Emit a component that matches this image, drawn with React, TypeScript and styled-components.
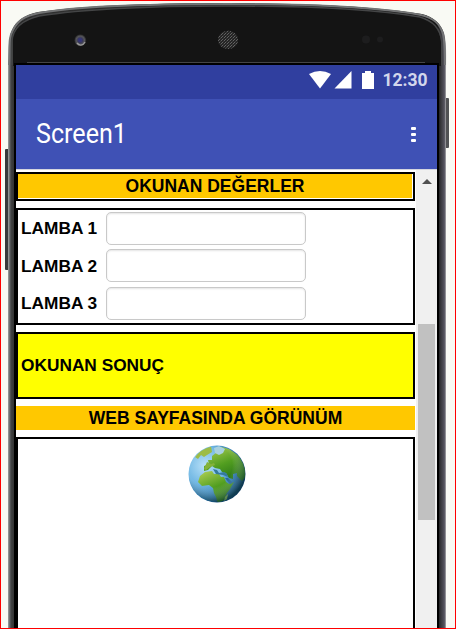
import React from "react";
import styled, { createGlobalStyle } from "styled-components";

const GlobalStyle = createGlobalStyle`
  *, *::before, *::after { box-sizing: border-box; }
  html, body { margin: 0; overflow: hidden; }
  body { font-family: "Liberation Sans", Arial, sans-serif; color: #000; }
`;

const Stage = styled.div`
  position: relative;
  width: 456px;
  height: 629px;
  overflow: hidden;
  background: #f9faf4;
  padding: 63px 17px 0 14px;
  &::after {
    content: "";
    position: absolute;
    inset: 0;
    border: 1px solid #ff0000;
    pointer-events: none;
  }
`;

const PhoneArt = styled.svg`
  position: absolute;
  inset: 0;
`;

const Screen = styled.main`
  position: relative;
  width: 425px;
  height: 566px;
  border: 2px solid #000;
  border-bottom: 0;
  background: #fff;
  display: flex;
  flex-direction: column;
`;

const StatusBar = styled.div`
  height: 34px;
  flex: none;
  background: #303f9f;
  display: flex;
  align-items: flex-start;
  justify-content: flex-end;
  padding: 5px 10px 0 0;
`;

const StatusIcons = styled.svg`
  display: block;
  margin-right: 8px;
`;

const Clock = styled.time`
  font: 700 17.5px/20px Roboto, sans-serif;
  color: #d3d7ec;
  width: 44.5px;
  white-space: nowrap;
`;

const TitleBar = styled.header`
  height: 71px;
  flex: none;
  background: #3f51b5;
  border-bottom: 1px solid #d4d5df;
  display: flex;
  align-items: center;
  justify-content: space-between;
  padding: 0 21px 0 20px;
`;

const Title = styled.h1`
  margin: 0;
  font: 400 27px/32px Roboto, sans-serif;
  color: #fff;
  transform: scaleX(0.93);
  transform-origin: left;
`;

const MenuButton = styled.button`
  border: 0;
  padding: 0;
  background: none;
  display: flex;
  flex-direction: column;
  gap: 3px;
`;

const Dot = styled.span`
  width: 5px;
  height: 3px;
  border-radius: 1px;
  background: #fff;
`;

const Viewport = styled.div`
  flex: 1;
  min-height: 0;
  display: flex;
`;

const Content = styled.div`
  width: 399px;
  padding-top: 2px;
  display: flex;
  flex-direction: column;
  gap: 7px;
`;

const Panel = styled.section<{ $height?: number; $color?: string }>`
  ${(p) => (p.$height ? `height: ${p.$height}px; flex: none;` : "flex: 1;")}
  border: 2px solid #000;
  background: ${(p) => p.$color ?? "#fff"};
  display: flex;
  flex-direction: column;
`;

const Heading = styled.h2`
  margin: 0;
  height: 24px;
  flex: none;
  background: #ffc800;
  font-size: 17.5px;
  line-height: 24px;
  text-align: center;
`;

const HeadingPanel = styled(Panel)`
  padding: 0 1px 1px 0;
`;

const Fields = styled(Panel)`
  padding: 2px 3px 0;
  gap: 4.7px;
`;

const Field = styled.label`
  display: grid;
  grid-template-columns: 85px 200px;
  align-items: center;
  height: 32.8px;
  font-size: 17.3px;
  font-weight: 700;
`;

const FieldName = styled.span`
  padding-top: 1px;
`;

const TextBox = styled.input`
  width: 200px;
  height: 32.8px;
  border: 1px solid #c9c9c9;
  border-radius: 5px;
  box-shadow: inset 0 1px 2px #e4e4e4;
  background: #fff;
`;

const Result = styled(Panel)`
  justify-content: center;
  padding-left: 3px;
  font-size: 17.3px;
  font-weight: 700;
`;

const WebPanel = styled(Panel)`
  align-items: center;
  padding: 4px 0 0 3px;
  border-bottom: 0;
`;

const Scrollbar = styled.div`
  width: 21px;
  margin-left: 1px;
  background: #f0f0f0;
  display: flex;
  flex-direction: column;
  align-items: flex-start;
  padding: 9px 0 0 2px;
`;

const ArrowUp = styled.span`
  margin-left: 3.5px;
  border: 5px solid transparent;
  border-top: 0;
  border-bottom-color: #505050;
`;

const Thumb = styled.div`
  width: 17px;
  height: 196px;
  flex: none;
  margin-top: 140px;
  background: #c1c1c1;
`;

const silhouette =
  "M8 640V66C9 52 8 38 12 30C16 21 24 15 38 12C78 6 150 3 228 3C310 3 382 7 422 14C434 17 441 24 444 33C447 44 446 58 446 76V640Z";

function Phone() {
  return (
    <PhoneArt width="456" height="629" viewBox="0 0 456 629" aria-hidden="true">
      <defs>
        <linearGradient id="side" x1="0" x2="1">
          <stop offset="0" stopColor="#a3a4a2" />
          <stop offset=".004" stopColor="#65676a" />
          <stop offset=".007" stopColor="#414243" />
          <stop offset=".014" stopColor="#323232" />
          <stop offset=".98" stopColor="#141414" />
          <stop offset=".988" stopColor="#38383c" />
          <stop offset=".996" stopColor="#56555f" />
          <stop offset="1" stopColor="#b5b5b5" />
        </linearGradient>
        <pattern id="speaker" width="3" height="3" patternUnits="userSpaceOnUse">
          <rect width="3" height="3" fill="#252525" />
          <path d="M0 0h1v1H0zM2 1h1v1H2z" fill="#626262" />
          <path d="M1 2h1v1H1z" fill="#404040" />
        </pattern>
        <radialGradient id="lens">
          <stop stopColor="#4a4b91" />
          <stop offset=".38" stopColor="#38385a" />
          <stop offset=".7" stopColor="#555558" />
          <stop offset="1" stopColor="#202020" />
        </radialGradient>
      </defs>
      <rect x="5" y="149" width="4" height="121" rx="1" fill="#393a3b" />
      <rect x="445" y="98" width="4" height="50" rx="1" fill="#515254" />
      <path d={silhouette} fill="url(#side)" />
      <path d="M13 66V37C13 27 22 19 38 16C85 9 151 6 228 6C310 6 379 9 421 17C433 20 440 29 441 43V66Z" fill="#141414" />
      <path d="M9 65C10 48 8 38 13 30C18 20 25 16 39 13C78 6 150 4 228 4C310 4 382 8 421 15C434 18 440 24 443 34C445 42 445 55 445 65" fill="none" stroke="#737475" strokeWidth="2" />
      <path d="M12 65V41C13 28 22 20 39 16C84 9 150 6 228 6C310 6 378 10 420 17C433 21 440 28 442 42V65" fill="none" stroke="#444546" strokeWidth="1.5" />
      <circle cx="80.3" cy="40.3" r="6" fill="url(#lens)" />
      <path d="M77 43c2 3 6 3 8-1" stroke="#999" strokeWidth="1.4" fill="none" />
      <circle cx="80" cy="40" r="2" fill="#343577" />
      <path d="M227 31C232 30 238 34 238 40S233 49 228 49 218 45 218 40 222 31 227 31Z" fill="url(#speaker)" />
      <circle cx="366" cy="39.5" r="4" fill="#1d1d1e" />
      <circle cx="380" cy="39.5" r="3" fill="#1d1d1e" />
      <path d="M27 62.5H425" stroke="#454546" />
    </PhoneArt>
  );
}

function Globe() {
  return (
    <svg width="60" height="60" viewBox="0 0 60 60" aria-label="Web">
      <defs>
        <radialGradient id="ocean" cx=".29" cy=".35" r=".75">
          <stop stopColor="#b9e1f8" />
          <stop offset=".45" stopColor="#72b8e4" />
          <stop offset=".75" stopColor="#2470a7" />
          <stop offset="1" stopColor="#08365f" />
        </radialGradient>
        <linearGradient id="land" x1=".2" y1="0" x2=".7" y2="1">
          <stop stopColor="#a7cb50" />
          <stop offset=".5" stopColor="#529e20" />
          <stop offset="1" stopColor="#246f15" />
        </linearGradient>
        <radialGradient id="shade" cx=".38" cy=".35" r=".65">
          <stop offset=".6" stopColor="#fff" stopOpacity="0" />
          <stop offset="1" stopColor="#163b38" stopOpacity=".48" />
        </radialGradient>
        <clipPath id="globe"><circle cx="30" cy="31" r="28" /></clipPath>
      </defs>
      <circle cx="30" cy="31" r="28.5" fill="url(#ocean)" />
      <g clipPath="url(#globe)">
        <path d="M8 14L15 6 24 3 25 9 20 12 17 14 14 12 11 16Z" fill="#9dbc47" />
        <path d="M25 13L30 9 34 4 42 6 52 13 58 23 59 33 55 38 50 33 50 30 46 31 46 36 42 35 39 30 35 29 33 26 28 25 25 23 21 27 17 28 17 23 22 21 21 17 25 17Z" fill="url(#land)" />
        <path d="M11 39L13 33 18 29 25 28 27 31 32 31 34 34 37 34 39 39 42 41 47 39 43 46 40 50 36 58 31 60 29 54 27 50 26 45 22 42 15 43Z" fill="url(#land)" />
        <path d="M27 5l5-2 6 3-2 4-4 2-4-2Z" fill="#a9d1df" />
        <path d="M20 19l4 2 3-1 1 2-5 2-4 3-2-1Z" fill="#84b23a" />
        <path d="M26 26l4 1 2 3 5-1 3 2 1 3-5-2-7-1Z" fill="#347a9c" />
        <path d="M38 35l5 6 3-1-5-5Z" fill="#28679a" />
        <path d="M38 54l3-3-1 5-3 2Z" fill="#8dbf55" />
      </g>
      <circle cx="30" cy="31" r="28" fill="url(#shade)" />
    </svg>
  );
}

const lamps = ["LAMBA 1", "LAMBA 2", "LAMBA 3"];

export default function App() {
  return (
    <>
      <GlobalStyle />
      <Stage>
        <Phone />
        <Screen>
          <StatusBar>
            <StatusIcons width="66" height="21" viewBox="0 0 66 21" fill="#fff">
              <path d="M0 4Q11-2 22 4L11 18.5Z" />
              <path d="M25.5 18.5L42.5 1V18.5Z" />
              <path d="M53 3h3V1h6v2h3v16H53Z" />
            </StatusIcons>
            <Clock>12:30</Clock>
          </StatusBar>
          <TitleBar>
            <Title>Screen1</Title>
            <MenuButton aria-label="Menu"><Dot /><Dot /><Dot /></MenuButton>
          </TitleBar>
          <Viewport>
            <Content>
              <HeadingPanel $height={29}><Heading>OKUNAN DEĞERLER</Heading></HeadingPanel>
              <Fields $height={117}>
                {lamps.map((lamp) => (
                  <Field key={lamp}><FieldName>{lamp}</FieldName><TextBox /></Field>
                ))}
              </Fields>
              <Result $height={67} $color="#ffff00">OKUNAN SONUÇ</Result>
              <Heading>WEB SAYFASINDA GÖRÜNÜM</Heading>
              <WebPanel><Globe /></WebPanel>
            </Content>
            <Scrollbar><ArrowUp /><Thumb /></Scrollbar>
          </Viewport>
        </Screen>
      </Stage>
    </>
  );
}
